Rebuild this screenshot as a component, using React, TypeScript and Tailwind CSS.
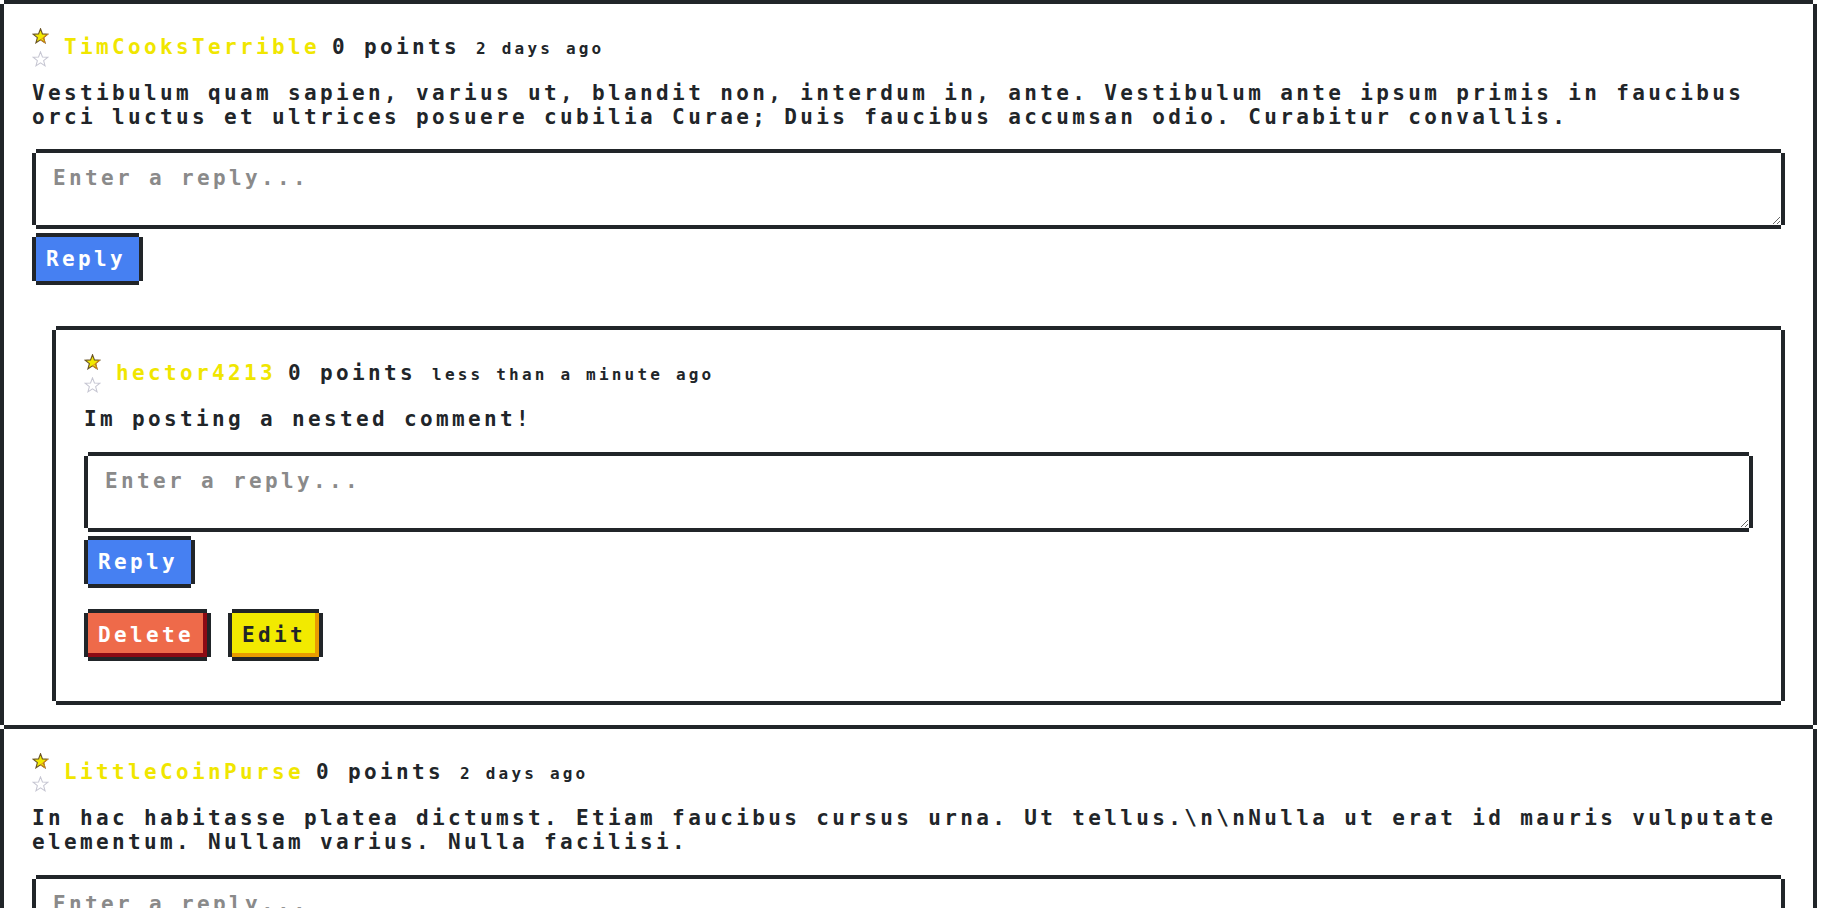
import React from "react";

const PX =
  "shadow-[0_-4px_0_0_#212529,0_4px_0_0_#212529,-4px_0_0_0_#212529,4px_0_0_0_#212529]";
const PX_RED =
  "shadow-[inset_-4px_-4px_0_0_#8c0a14,0_-4px_0_0_#212529,0_4px_0_0_#212529,-4px_0_0_0_#212529,4px_0_0_0_#212529]";
const PX_YEL =
  "shadow-[inset_-4px_-4px_0_0_#e89c00,0_-4px_0_0_#212529,0_4px_0_0_#212529,-4px_0_0_0_#212529,4px_0_0_0_#212529]";

const STAR = "8,0.8 9.88,5.71 15.13,5.98 11.04,9.29 12.41,14.37 8,11.5 3.59,14.37 4.96,9.29 0.87,5.98 6.12,5.71";

function Star({ filled }: { filled: boolean }) {
  return (
    <svg width="17" height="16" viewBox="0 0 16 15.5" className="block">
      {filled ? (
        <>
          <polygon points={STAR} fill="#f2ea00" stroke="#6b5524" strokeWidth="1.1" strokeLinejoin="miter" />
          <polygon points="8,11.5 12.41,14.37 11.04,9.29 15.13,5.98" fill="none" stroke="#d98a1c" strokeWidth="0.9" />
        </>
      ) : (
        <polygon points={STAR} fill="#ffffff" stroke="#c6c6d2" strokeWidth="1" />
      )}
    </svg>
  );
}

function ReplyBox() {
  return (
    <>
      <textarea
        placeholder="Enter a reply..."
        className={`${PX} m-[4px] block h-[72px] w-[calc(100%-8px)] resize-y bg-white pl-[17px] pr-[16px] pt-[13px] leading-[24px] tracking-[3.36px] text-[#212529] outline-none placeholder:text-[#8a8a8a]`}
      />
      <button
        className={`${PX} mx-[4px] mt-[8px] mb-[4px] self-start bg-[#4680f2] pl-[10px] pr-[13px] py-[10px] leading-[24px] text-white`}
      >
        Reply
      </button>
    </>
  );
}

function Header({ user, time }: { user: string; time: string }) {
  return (
    <div className="flex items-start">
      <div className="flex w-[17px] flex-col gap-[7px] pt-[0px]">
        <Star filled />
        <Star filled={false} />
      </div>
      <div className="ml-[15px] mt-[7px] -mb-[1px] flex items-baseline leading-[24px]">
        <span className="text-[#f0e600]">{user}</span>
        <span className="ml-[12px]">0 points</span>
        <span className="ml-[16px] text-[16px] tracking-[3.2px]">{time}</span>
      </div>
    </div>
  );
}

export default function App() {
  return (
    <div className="min-h-screen bg-white font-['DejaVu_Sans_Mono',monospace] text-[21px] font-bold leading-[24px] tracking-[3.36px] text-[#212529]">
      <div className="flex w-[1817px] flex-col gap-[4px] p-[4px]">
        {/* Comment 1 */}
        <div className={`${PX} flex flex-col bg-white px-[28px] pt-[24px] pb-[24px]`}>
          <Header user="TimCooksTerrible" time="2 days ago" />
          <p className="mt-[14px] mb-[20px]">
            Vestibulum quam sapien, varius ut, blandit non, interdum in, ante. Vestibulum ante ipsum primis in
            faucibus orci luctus et ultrices posuere cubilia Curae; Duis faucibus accumsan odio. Curabitur convallis.
          </p>
          <ReplyBox />

          {/* Nested */}
          <div className="ml-[24px] mr-[4px] mt-[45px]">
            <div className={`${PX} flex flex-col bg-white px-[28px] pt-[24px] pb-[40px]`}>
              <Header user="hector4213" time="less than a minute ago" />
              <p className="mt-[14px] mb-[21px]">Im posting a nested comment!</p>
              <ReplyBox />
              <div className="mt-[21px] flex gap-[17px]">
                <button
                  className={`${PX_RED} m-[4px] bg-[#ee6a4a] pl-[10px] pr-[13px] py-[10px] leading-[24px] text-white`}
                >
                  Delete
                </button>
                <button
                  className={`${PX_YEL} m-[4px] bg-[#f2ea00] pl-[10px] pr-[13px] py-[10px] leading-[24px] text-[#212529]`}
                >
                  Edit
                </button>
              </div>
            </div>
          </div>
        </div>

        {/* Comment 2 */}
        <div className={`${PX} flex flex-col bg-white px-[28px] pt-[24px] pb-[24px]`}>
          <Header user="LittleCoinPurse" time="2 days ago" />
          <p className="mt-[14px] mb-[21px]">
            {"In hac habitasse platea dictumst. Etiam faucibus cursus urna. Ut tellus.\\n\\nNulla ut erat id mauris vulputate elementum. Nullam varius. Nulla facilisi."}
          </p>
          <ReplyBox />
        </div>
      </div>
    </div>
  );
}
